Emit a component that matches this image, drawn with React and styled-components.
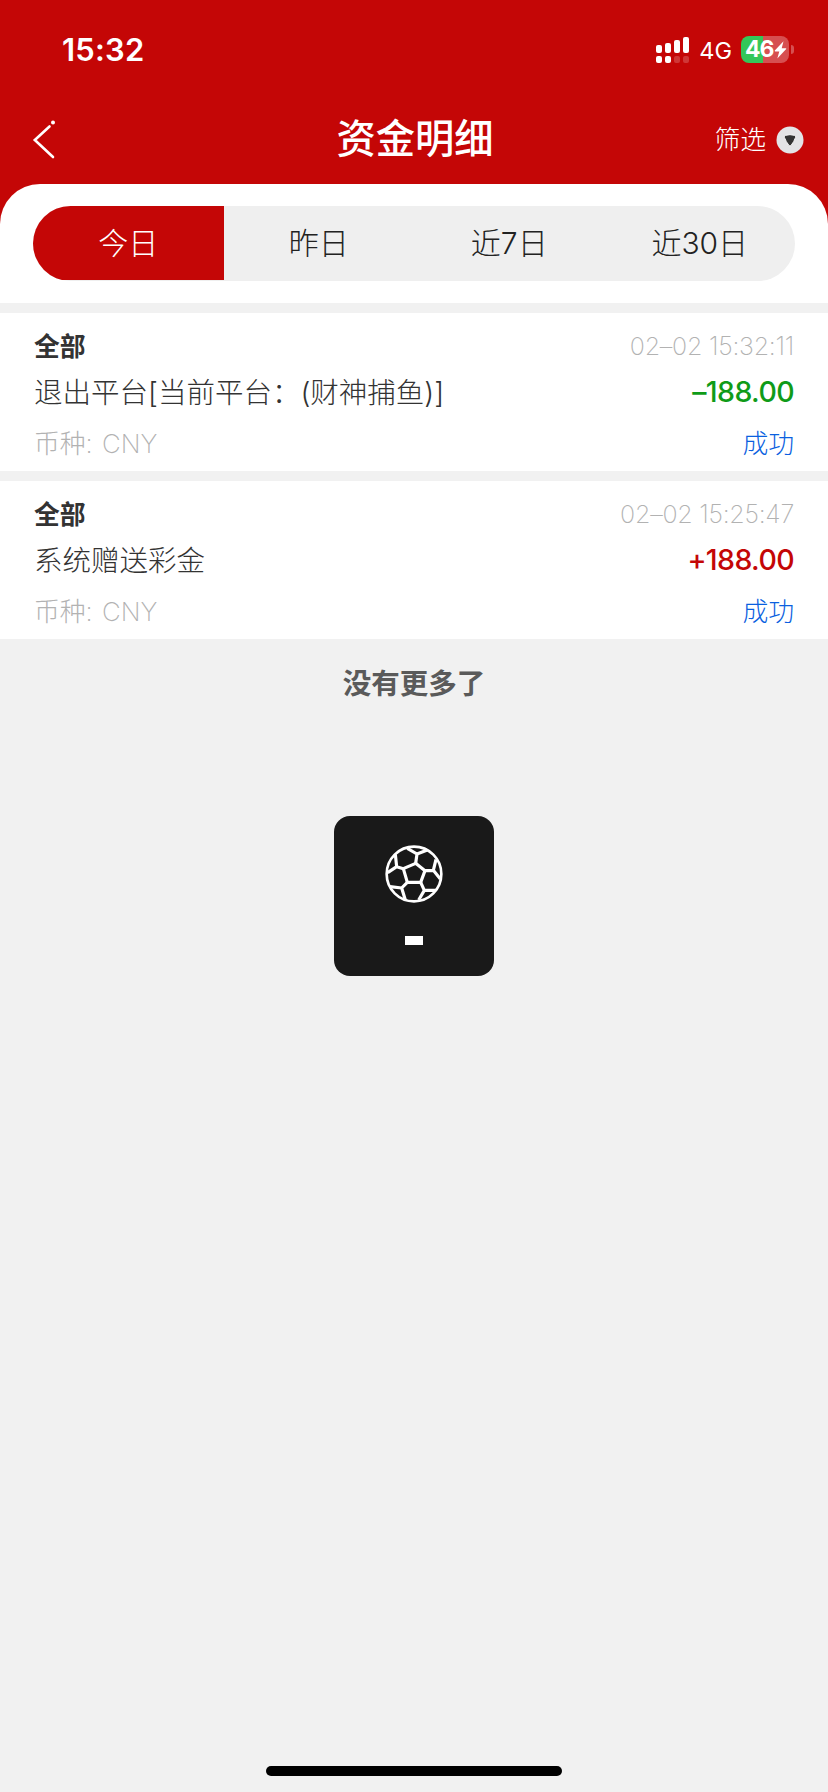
import React from 'react'
import styled, { createGlobalStyle } from 'styled-components'

const GlobalStyle = createGlobalStyle`
  * {
    box-sizing: border-box;
  }

  body {
    margin: 0;
    background: #f1f1f1;
    font-family: Inter, 'Noto Sans CJK SC', sans-serif;
    color: #333;
  }
`

const Page = styled.div`
  position: relative;
  display: flex;
  flex-direction: column;
  width: 828px;
  height: 1792px;
  overflow: hidden;
  white-space: nowrap;
`

const Header = styled.header`
  height: 224px;
  background: #c40606;
  color: #fff;
`

const StatusBar = styled.div`
  display: flex;
  align-items: center;
  justify-content: space-between;
  height: 99px;
  padding: 0 34px 0 62px;
`

const Clock = styled.span`
  font-size: 31px;
  font-weight: 600;
  line-height: 36px;
  letter-spacing: 0.2px;
`

const StatusIcons = styled.div`
  display: flex;
  align-items: center;
`

const Network = styled.span`
  margin: 3px 9px 0 10px;
  font-size: 23.5px;
  line-height: 28px;
  letter-spacing: 0;
`

const Battery = styled.div`
  display: flex;
  align-items: center;
  width: 48px;
  height: 27px;
  padding-left: 4px;
  border-radius: 8px;
  background: linear-gradient(to right, #34c759 22px, #d64f50 22px);
  font-size: 23px;
  font-weight: 700;
  line-height: 27px;
  letter-spacing: -1px;
`

const BatteryTip = styled.div`
  width: 3px;
  height: 9px;
  margin-left: 2px;
  border-radius: 0 4px 4px 0;
  background: #d64f50;
`

const NavBar = styled.div`
  display: grid;
  grid-template-columns: 1fr auto 1fr;
  align-items: center;
  height: 80px;
  padding: 0 24px 0 26px;
`

const BackButton = styled.button`
  display: flex;
  justify-self: start;
  margin-left: 6px;
  padding: 0;
  border: 0;
  background: none;
`

const Title = styled.h1`
  margin: 0;
  font-size: 39.3px;
  font-weight: 500;
  line-height: 48px;
`

const Filter = styled.div`
  display: flex;
  align-items: center;
  justify-self: end;
  gap: 10px;
  padding-top: 1px;
  font-size: 25.8px;
  font-weight: 300;
  line-height: 32px;
`

const Panel = styled.div`
  height: 119px;
  margin-top: -40px;
  padding: 22px 33px;
  border-radius: 40px 40px 0 0;
  background: #fff;
`

const Tabs = styled.div`
  display: grid;
  grid-template-columns: repeat(4, 1fr);
  height: 75px;
  border-radius: 38px;
  background: #efefef;
  overflow: hidden;
`

const Tab = styled.div`
  height: 74px;
  background: ${({ $active }) => ($active ? '#c40606' : 'transparent')};
  color: ${({ $active }) => ($active ? '#fff' : '#222')};
  font-size: 30px;
  font-weight: 300;
  line-height: 74px;
  text-align: center;
`

const Record = styled.section`
  height: 158px;
  margin-top: 10px;
  padding: 11px 34px 0;
  background: #fff;
`

const Row = styled.div`
  display: flex;
  align-items: center;
  justify-content: space-between;
  height: ${({ $height }) => $height}px;
`

const Kind = styled.span`
  padding-bottom: 3px;
  font-size: 25.8px;
  font-weight: 700;
`

const Time = styled.span`
  color: #b2b2b2;
  font-size: 25px;
  font-weight: 200;
  letter-spacing: -0.25px;
`

const Description = styled.span`
  padding-bottom: 2px;
  font-size: 28.5px;
  font-weight: 300;
`

const Amount = styled.span`
  color: ${({ $income }) => ($income ? '#c40606' : '#0f9b18')};
  font-size: 28.5px;
  font-weight: 500;
  letter-spacing: -0.6px;
`

const Currency = styled.span`
  padding-bottom: 3px;
  color: #b2b2b2;
  font-size: 25.8px;
  font-weight: 200;
  word-spacing: 2px;
`

const Status = styled.span`
  padding-bottom: 3px;
  color: #0a5fe0;
  font-size: 25.8px;
  font-weight: 300;
`

const NoMore = styled.p`
  margin: 25px 0 0;
  color: #5a5a5a;
  font-size: 28.5px;
  font-weight: 700;
  line-height: 40px;
  text-align: center;
`

const Toast = styled.div`
  position: absolute;
  top: 816px;
  left: 334px;
  display: flex;
  flex-direction: column;
  align-items: center;
  width: 160px;
  height: 160px;
  padding-top: 29px;
  border-radius: 16px;
  background: #191919;
`

const ToastDash = styled.div`
  width: 18px;
  height: 9px;
  margin-top: 33px;
  background: #fff;
`

const HomeIndicator = styled.div`
  width: 296px;
  height: 10px;
  margin: auto auto 16px;
  border-radius: 5px;
  background: #000;
`

const SignalIcon = () => (
  <svg width="33" height="26" viewBox="0 0 33 26" fill="#fff">
    <rect x="0" y="8" width="6" height="8" rx="2" />
    <rect x="9" y="6" width="6" height="10" rx="2" />
    <rect x="18" y="3" width="6" height="13" rx="2" />
    <rect x="27" y="0" width="6" height="16" rx="2" />
    <rect x="0" y="19" width="6" height="7" rx="2" />
    <rect x="9" y="19" width="6" height="7" rx="2" />
    <rect x="18" y="19" width="6" height="7" rx="2" opacity="0.2" />
    <rect x="27" y="19" width="6" height="7" rx="2" opacity="0.2" />
  </svg>
)

const BoltIcon = () => (
  <svg width="13" height="18" viewBox="0 0 13 18" fill="#fff">
    <path d="M9.5 0.3 L0.8 9.6 Q0.3 10.4 1.2 10.4 H5.3 L3.3 17.6 L12.2 8.1 Q12.6 7.2 11.7 7.2 H7.7 Z" />
  </svg>
)

const BackIcon = () => (
  <svg
    width="24"
    height="40"
    viewBox="0 0 24 40"
    fill="none"
    stroke="#fff"
    strokeWidth="2.6"
    strokeLinecap="round"
  >
    <path d="M17.5 7.5 L2.8 21 L21 38" />
    <circle cx="21" cy="3.5" r="2" fill="#fff" stroke="none" />
  </svg>
)

const FilterIcon = () => (
  <svg width="28" height="28" viewBox="0 0 28 28">
    <circle cx="14" cy="14" r="13.5" fill="#e3e3e5" />
    <path
      d="M9.2 9.4 Q14 7.9 18.8 9.4 Q20.1 9.9 19.6 11.4 Q18 15.8 15 19.5 Q14 20.5 13 19.5 Q10 15.8 8.4 11.4 Q7.9 9.9 9.2 9.4 Z"
      fill="#333"
      stroke="#f6f6f6"
      strokeWidth="1"
    />
  </svg>
)

const BallIcon = () => (
  <svg
    width="58"
    height="58"
    viewBox="195 135 174 174"
    fill="none"
    stroke="#fff"
    strokeWidth="9.5"
    strokeLinejoin="round"
  >
    <circle cx="282" cy="222" r="82" strokeWidth="8" />
    <path d="M287 190 L315 212 L302 247 L262 247 L250 206 Z" />
    <path d="M287 190 L291 162 M262 145 L291 162 L322 150" />
    <path d="M315 212 L340 211 M348 178 L340 211 L361 237" />
    <path d="M302 247 L313 271 M348 271 L313 271 L296 300" />
    <path d="M262 247 L245 264 M210 260 L245 264 L256 300" />
    <path d="M250 206 L230 200 M226 163 L230 200 L203 218" />
  </svg>
)

const tabs = ['今日', '昨日', '近7日', '近30日']

const records = [
  {
    kind: '全部',
    time: '02–02 15:32:11',
    description: '退出平台[当前平台：(财神捕鱼)]',
    amount: '–188.00',
    income: false,
  },
  {
    kind: '全部',
    time: '02–02 15:25:47',
    description: '系统赠送彩金',
    amount: '+188.00',
    income: true,
  },
]

const App = () => {
  return (
    <>
      <GlobalStyle />
      <Page>
        <Header>
          <StatusBar>
            <Clock>15:32</Clock>
            <StatusIcons>
              <SignalIcon />
              <Network>4G</Network>
              <Battery>
                46
                <BoltIcon />
              </Battery>
              <BatteryTip />
            </StatusIcons>
          </StatusBar>
          <NavBar>
            <BackButton type="button" aria-label="返回">
              <BackIcon />
            </BackButton>
            <Title>资金明细</Title>
            <Filter>
              筛选
              <FilterIcon />
            </Filter>
          </NavBar>
        </Header>
        <Panel>
          <Tabs>
            {tabs.map((tab, i) => (
              <Tab key={tab} $active={i === 0}>
                {tab}
              </Tab>
            ))}
          </Tabs>
        </Panel>
        {records.map((record) => (
          <Record key={record.time}>
            <Row $height={44}>
              <Kind>{record.kind}</Kind>
              <Time>{record.time}</Time>
            </Row>
            <Row $height={47}>
              <Description>{record.description}</Description>
              <Amount $income={record.income}>{record.amount}</Amount>
            </Row>
            <Row $height={56}>
              <Currency>币种: CNY</Currency>
              <Status>成功</Status>
            </Row>
          </Record>
        ))}
        <NoMore>没有更多了</NoMore>
        <HomeIndicator />
        <Toast>
          <BallIcon />
          <ToastDash />
        </Toast>
      </Page>
    </>
  )
}

export default App
